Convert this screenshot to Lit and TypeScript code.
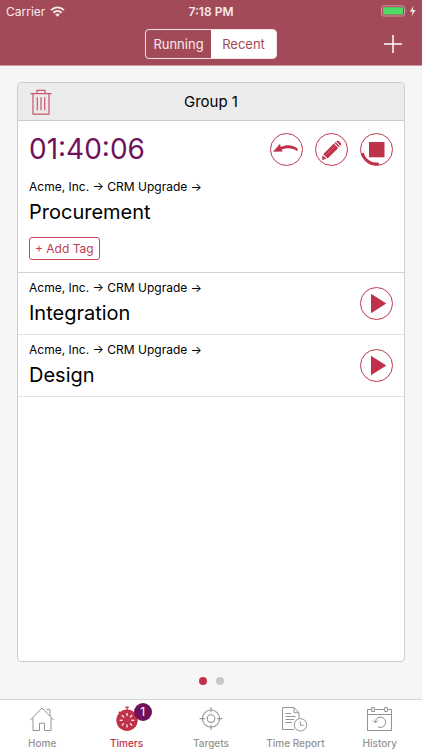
import { LitElement, html, css, svg, nothing } from "lit";
import { customElement, property, state } from "lit/decorators.js";
import { classMap } from "lit/directives/class-map.js";

const undoIcon = html`<svg width="31" height="31" viewBox="1 1 31 31" aria-hidden="true">
  <path d="M3 18.8 L10 10.8 L10.8 14 C17 11 23.5 12 27.8 15.8 L27.2 18.2 C22.5 14.8 17 14.6 11.7 16.6 L12.8 18.4 Z" fill="currentColor"/>
</svg>`;

const pencilIcon = html`<svg width="31" height="31" viewBox="1 1 31 31" aria-hidden="true">
  <g fill="currentColor">
    <path d="M8.2 21.2 L18.8 10.6 L23.2 15 L12.6 25.6 Z"/>
    <path d="M7.5 22.2 L11.6 26.1 L7 26.7 Z"/>
    <path d="M19.5 9.9 L20.5 8.9 L24.9 13.3 L23.9 14.3 Z"/>
    <path d="M21.1 8.3 C22 7.4 23.3 7.4 24.2 8.3 L25.4 9.5 C26.3 10.4 26.3 11.9 25.5 12.7 Z"/>
  </g>
  <path d="M10.5 22.5 L20.3 12.7" stroke="#d77686" stroke-width="0.7" fill="none"/>
</svg>`;

const stopIcon = html`<svg width="31" height="31" viewBox="1 1 31 31" aria-hidden="true">
  <rect x="9" y="9" width="15.5" height="15.3" fill="currentColor"/>
  <path d="M2.4 20 A14.8 14.8 0 0 0 18.9 30.8" fill="none" stroke="currentColor" stroke-width="2.8"/>
</svg>`;

const playIcon = html`<svg width="31" height="31" viewBox="1 1 31 31" aria-hidden="true">
  <path d="M11 6.8 L26.3 16.5 L11 26.2 Z" fill="currentColor"/>
</svg>`;

const trashIcon = html`<svg width="22" height="26" viewBox="0 0 22 26" aria-hidden="true">
  <g fill="none" stroke="currentColor" stroke-width="1.2">
    <path d="M0.5 4.6 H21.5 M7 4.6 V1.4 H15 V4.6"/>
    <path d="M3 4.6 V25.2 H19 V4.6 M7.3 8.3 V21.3 M11 8.3 V21.3 M14.7 8.3 V21.3"/>
  </g>
</svg>`;

const homeIcon = html`<svg width="28" height="28" viewBox="0 0 28 28" aria-hidden="true">
  <g fill="none" stroke="currentColor" stroke-width="1">
    <path d="M2.2 15.2 L14 3 L25.8 15.2"/>
    <path d="M5 12.8 V25.5 H11.5 V18.2 H16.5 V25.5 H23 V12.8"/>
    <path d="M18.5 4.3 H22 V11"/>
  </g>
</svg>`;

const ticks = [0, 45, 90, 135, 180, 225, 270, 315];
const timerIcon = html`<svg width="28" height="28" viewBox="0 0 28 28" aria-hidden="true">
  <g fill="currentColor">
    <circle cx="14" cy="15.3" r="10.7"/>
    <rect x="12.3" y="1.6" width="3.6" height="1.3"/>
    <rect x="13.5" y="2" width="1.2" height="4"/>
    <path d="M6.4 6.2 L7.4 7.2 L6.4 8.4 L5.3 7.4 Z"/>
  </g>
  ${ticks.map((a) => svg`<line x1="14" y1="8" x2="14" y2="11" stroke="#fff" stroke-width="1.2" transform="rotate(${a} 14 15.3)"/>`)}
</svg>`;

const targetIcon = html`<svg width="28" height="28" viewBox="0 0 28 28" aria-hidden="true">
  <g fill="none" stroke="currentColor" stroke-width="1.1">
    <circle cx="14" cy="13.6" r="8.6"/>
    <circle cx="14" cy="13.6" r="3.8"/>
    <path d="M14 2.2 V7.4 M14 19.8 V25 M2.6 13.6 H7.8 M20.2 13.6 H25.4"/>
  </g>
</svg>`;

const reportIcon = html`<svg width="28" height="28" viewBox="0 0 28 28" aria-hidden="true">
  <g fill="none" stroke="currentColor" stroke-width="1">
    <path d="M13.3 24.5 H1.5 V2.5 H13 L18 7.8 V13 M13 2.5 V7.8 H18"/>
    <path d="M4.5 8.5 H10 M4.5 11.5 H14.5 M4.5 14.5 H13 M4.5 17.5 H11"/>
    <circle cx="19.5" cy="19.8" r="6.2"/>
    <path d="M19.3 16.4 V20.3 H22.5"/>
  </g>
</svg>`;

const historyIcon = html`<svg width="28" height="28" viewBox="0 0 28 28" aria-hidden="true">
  <g fill="none" stroke="currentColor" stroke-width="1">
    <path d="M5.5 4.5 H1.5 V25.5 H25.5 V4.5 H21.5 M8.5 4.5 H18.5 M1.5 9.5 H25.5"/>
    <path d="M5.7 2.5 H8.3 V6.5 H5.7 Z M18.7 2.5 H21.3 V6.5 H18.7 Z"/>
    <path d="M9.2 17.3 A5.2 5.2 0 1 1 12 21.9 M7 15.4 L9.2 17.8 L11.8 15.6"/>
  </g>
</svg>`;

const tabs = [
  { id: "home", label: "Home", icon: homeIcon, badge: 0 },
  { id: "timers", label: "Timers", icon: timerIcon, badge: 1 },
  { id: "targets", label: "Targets", icon: targetIcon, badge: 0 },
  { id: "report", label: "Time Report", icon: reportIcon, badge: 0 },
  { id: "history", label: "History", icon: historyIcon, badge: 0 },
];

@customElement("status-bar")
export class StatusBar extends LitElement {
  static styles = css`
    :host {
      display: grid;
      grid-template-columns: 1fr auto 1fr;
      align-items: center;
      height: 22px;
      padding: 0 6px;
      font-size: 12px;
      color: #f7e9eb;
    }
    .left,
    .right {
      display: flex;
      align-items: center;
      gap: 5px;
    }
    .right {
      justify-content: flex-end;
    }
    .clock {
      font-weight: 600;
    }
  `;
  render() {
    return html`
      <span class="left">Carrier
        <svg width="15" height="11" viewBox="0 0 15 11" role="img" aria-label="Wi-Fi">
          <g fill="none" stroke="currentColor" stroke-width="1.9">
            <path d="M1 4.1 C4.8 0.4 10.2 0.4 14 4.1"/>
            <path d="M3.4 6.7 C5.8 4.4 9.2 4.4 11.6 6.7"/>
          </g>
          <path d="M7.5 10.7 L5.2 8.4 C6.6 7.2 8.4 7.2 9.8 8.4 Z" fill="currentColor"/>
        </svg>
      </span>
      <span class="clock">7:18 PM</span>
      <span class="right">
        <svg width="35" height="12" viewBox="0 0 35 12" role="img" aria-label="Battery charging">
          <rect x="0.5" y="0.8" width="23" height="10.2" rx="2" fill="none" stroke="#cb9aa2"/>
          <rect x="2" y="2.3" width="20" height="7.2" rx="0.8" fill="#4cd964"/>
          <path d="M24.8 4.2 Q26.4 5.9 24.8 7.6 Z" fill="#cb9aa2"/>
          <path d="M32.4 0.8 L29 6.8 H31.6 L30.6 11.2 L34.6 5 H31.8 Z" fill="currentColor"/>
        </svg>
      </span>
    `;
  }
}

@customElement("timer-row")
export class TimerRow extends LitElement {
  @property() path = "";
  @property() name = "";
  @property() elapsed = "";

  static styles = css`
    :host {
      display: block;
      border-bottom: 1px solid #e4e4e4;
      padding: 7px 11px;
    }
    :host([elapsed]) {
      border-bottom-color: #d2d2d2;
      padding: 12px 11px;
    }
    .top,
    .row {
      display: flex;
      align-items: center;
      justify-content: space-between;
    }
    .top {
      margin-bottom: 13px;
    }
    .time {
      font-size: 28px;
      line-height: 33px;
      color: #70125a;
    }
    .actions {
      display: flex;
      gap: 12px;
    }
    .path {
      margin: 0 0 3px;
      font-size: 12px;
      line-height: 16px;
    }
    .name {
      margin: 0;
      font-size: 20px;
      line-height: 28px;
      font-weight: 400;
    }
    .round {
      box-sizing: border-box;
      display: grid;
      place-items: center;
      width: 33px;
      height: 33px;
      padding: 0;
      border: 1px solid #bf3850;
      border-radius: 50%;
      background: none;
      color: #c0314b;
    }
    .tag {
      margin-top: 11px;
      height: 23px;
      padding: 0 5px;
      border: 1px solid #c4485e;
      border-radius: 3px;
      background: none;
      color: #bd3c54;
      font: inherit;
      font-size: 12px;
      display: block;
    }
  `;
  render() {
    const text = html`<div>
      <p class="path">${this.path}</p>
      <h2 class="name">${this.name}</h2>
    </div>`;
    if (!this.elapsed) {
      return html`<div class="row">${text}
        <button class="round" aria-label="Start ${this.name}">${playIcon}</button>
      </div>`;
    }
    return html`
      <div class="top">
        <span class="time">${this.elapsed}</span>
        <div class="actions">
          <button class="round" aria-label="Undo">${undoIcon}</button>
          <button class="round" aria-label="Edit">${pencilIcon}</button>
          <button class="round" aria-label="Stop">${stopIcon}</button>
        </div>
      </div>
      ${text}
      <button class="tag">+ Add Tag</button>
    `;
  }
}

@customElement("app-root")
export class AppRoot extends LitElement {
  @state() private view = "Recent";
  @state() private tab = "timers";
  @state() private pageIndex = 0;

  static styles = css`
    :host {
      display: flex;
      flex-direction: column;
      min-height: 100vh;
      background: #f6f6f6;
      color: #000;
      font-family: Inter, "Noto Sans", sans-serif;
    }
    .header {
      background: #a34a58;
      border-bottom: 1px solid #c99ba2;
    }
    .navbar {
      display: grid;
      grid-template-columns: 1fr auto 1fr;
      align-items: center;
      height: 43px;
      padding: 0 18px;
    }
    .segments {
      grid-column: 2;
      display: grid;
      grid-template-columns: 1fr 1fr;
      border: 1px solid #f3e3e6;
      border-radius: 4px;
      overflow: hidden;
    }
    .segment {
      width: 65px;
      height: 28px;
      padding: 0;
      border: 0;
      background: none;
      color: #f7e9eb;
      font: inherit;
      font-size: 13px;
    }
    .segment.on {
      background: #fff;
      color: #a34a58;
    }
    .add {
      justify-self: end;
      display: grid;
      padding: 0;
      border: 0;
      background: none;
      color: #fff;
    }
    .main {
      flex: 1;
      display: flex;
      flex-direction: column;
      padding: 16px 17px 0;
    }
    .card {
      flex: 1;
      border: 1px solid #cdcdcd;
      border-radius: 4px;
      background: #fff;
      overflow: hidden;
    }
    .group {
      display: grid;
      grid-template-columns: 1fr auto 1fr;
      align-items: center;
      height: 37px;
      padding: 0 12px;
      border-bottom: 1px solid #cdcdcd;
      background: #ebebeb;
    }
    .group-name {
      margin: 0;
      font-size: 15px;
      font-weight: 400;
    }
    .trash {
      justify-self: start;
      display: grid;
      padding: 0;
      border: 0;
      background: none;
      color: #c9566a;
    }
    .dots {
      display: flex;
      justify-content: center;
      align-items: center;
      gap: 9px;
      height: 37px;
    }
    .dot {
      width: 8px;
      height: 8px;
      padding: 0;
      border: 0;
      border-radius: 50%;
      background: #c8c8c8;
    }
    .dot.on {
      background: #c0314b;
    }
    .tabs {
      display: grid;
      grid-template-columns: repeat(5, 1fr);
      height: 50px;
      border-top: 1px solid #d4d4d4;
      background: #fff;
    }
    .tab {
      display: flex;
      flex-direction: column;
      align-items: center;
      padding-top: 5px;
      color: #949494;
      font-size: 10px;
      line-height: 16px;
      font-weight: 500;
      text-decoration: none;
      white-space: nowrap;
    }
    .tab.on {
      color: #c0314b;
    }
    .glyph {
      position: relative;
      display: grid;
      height: 30px;
    }
    .badge {
      position: absolute;
      top: -2px;
      left: 21px;
      width: 18px;
      height: 18px;
      border-radius: 50%;
      background: #70125a;
      color: #fff;
      font-size: 12px;
      font-weight: 400;
      line-height: 18px;
      text-align: center;
    }
  `;

  render() {
    return html`
      <header class="header">
        <status-bar></status-bar>
        <div class="navbar">
          <div class="segments">
            ${["Running", "Recent"].map(
              (v) => html`<button
                class=${classMap({ segment: true, on: this.view === v })}
                aria-pressed=${this.view === v}
                @click=${() => (this.view = v)}
              >${v}</button>`
            )}
          </div>
          <button class="add" aria-label="Add timer">
            <svg width="22" height="22" viewBox="0 0 22 22" aria-hidden="true">
              <path d="M11 2 V20 M2 11 H20" stroke="currentColor" stroke-width="1.5"/>
            </svg>
          </button>
        </div>
      </header>
      <main class="main">
        <section class="card">
          <div class="group">
            <button class="trash" aria-label="Delete group">${trashIcon}</button>
            <h1 class="group-name">Group 1</h1>
          </div>
          <timer-row elapsed="01:40:06" path="Acme, Inc. → CRM Upgrade →" name="Procurement"></timer-row>
          <timer-row path="Acme, Inc. → CRM Upgrade →" name="Integration"></timer-row>
          <timer-row path="Acme, Inc. → CRM Upgrade →" name="Design"></timer-row>
        </section>
        <div class="dots">
          ${[0, 1].map(
            (i) => html`<button
              class=${classMap({ dot: true, on: this.pageIndex === i })}
              aria-label="Group ${i + 1}"
              @click=${() => (this.pageIndex = i)}
            ></button>`
          )}
        </div>
      </main>
      <nav class="tabs">
        ${tabs.map(
          (t) => html`<a
            class=${classMap({ tab: true, on: this.tab === t.id })}
            href="#${t.id}"
            @click=${() => (this.tab = t.id)}
          ><span class="glyph">${t.icon}${t.badge ? html`<span class="badge">${t.badge}</span>` : nothing}</span>${t.label}</a>`
        )}
      </nav>
    `;
  }
}
